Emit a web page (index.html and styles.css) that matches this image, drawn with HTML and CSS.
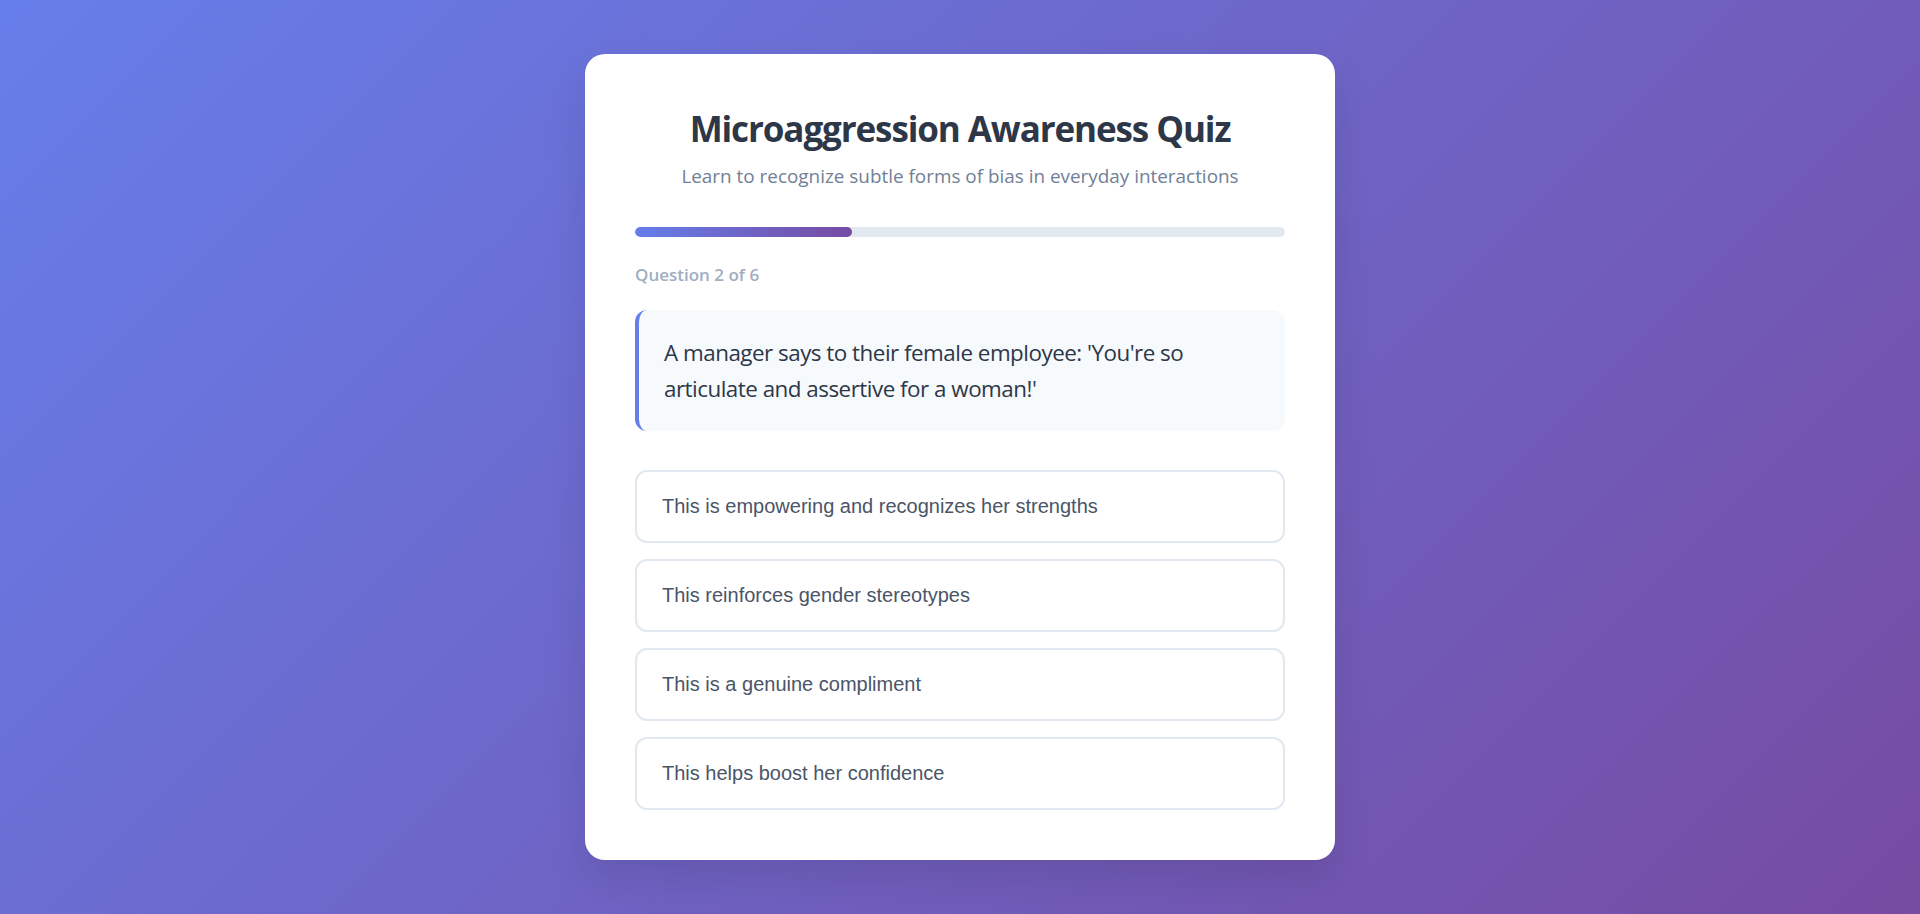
FILE: index.html
```html
<!DOCTYPE html>
<html lang="en">
<head>
<meta charset="UTF-8">
<title>Microaggression Awareness Quiz</title>
<link rel="stylesheet" href="styles.css">
</head>
<body>
<div class="card">
  <header class="header">
    <h1 class="title">Microaggression Awareness Quiz</h1>
    <p class="subtitle">Learn to recognize subtle forms of bias in everyday interactions</p>
  </header>
  <div class="progress"><div class="progress-fill" style="width: 33.333%"></div></div>
  <div class="counter">Question 2 of 6</div>
  <div class="scenario">A manager says to their female employee: 'You're so articulate and assertive for a woman!'</div>
  <div class="options">
    <button class="option">This is empowering and recognizes her strengths</button>
    <button class="option">This reinforces gender stereotypes</button>
    <button class="option">This is a genuine compliment</button>
    <button class="option">This helps boost her confidence</button>
  </div>
</div>
</body>
</html>
```
FILE: styles.css
```css
* { box-sizing: border-box; }
html, body { margin: 0; padding: 0; }
body {
  min-height: 100vh;
  background: linear-gradient(135deg, #667eea 0%, #764ba2 100%);
  font-family: "Open Sans", "Noto Sans", sans-serif;
  display: flex;
  align-items: center;
  justify-content: center;
}
.card {
  width: 750px;
  background: #ffffff;
  border-radius: 20px;
  padding: 50px;
  box-shadow: 0 20px 40px rgba(0, 0, 0, 0.1);
}
.header { text-align: center; margin-bottom: 37px; }
.title {
  margin: 4px 0 13px;
  font-size: 35px;
  line-height: 42px;
  font-weight: 700;
  color: #2d3748;
  letter-spacing: -1.1px;
}
.subtitle {
  margin: 0;
  font-size: 18.9px;
  line-height: 27px;
  color: #718096;
}
.progress {
  height: 10px;
  background: #e2e8f0;
  border-radius: 5px;
  overflow: hidden;
  margin-bottom: 26px;
}
.progress-fill {
  height: 100%;
  border-radius: 5px;
  background: linear-gradient(90deg, #667eea, #764ba2);
}
.counter {
  font-size: 17px;
  line-height: 24px;
  font-weight: 600;
  color: #a0aec0;
  margin-bottom: 23px;
}
.scenario {
  background: #f7fafc;
  border-left: 4px solid #667eea;
  border-radius: 12px;
  padding: 25px;
  font-size: 22.4px;
  line-height: 1.6;
  color: #2d3748;
  margin-bottom: 39px;
  letter-spacing: -0.5px;
}
.options { display: flex; flex-direction: column; gap: 16px; }
.option {
  display: block;
  width: 100%;
  text-align: left;
  background: #ffffff;
  border: 2px solid #e2e8f0;
  border-radius: 12px;
  padding: 22px 25px;
  font-family: "Liberation Sans", Arial, sans-serif;
  font-size: 20px;
  line-height: 25px;
  color: #4a5568;
  cursor: pointer;
}
```
